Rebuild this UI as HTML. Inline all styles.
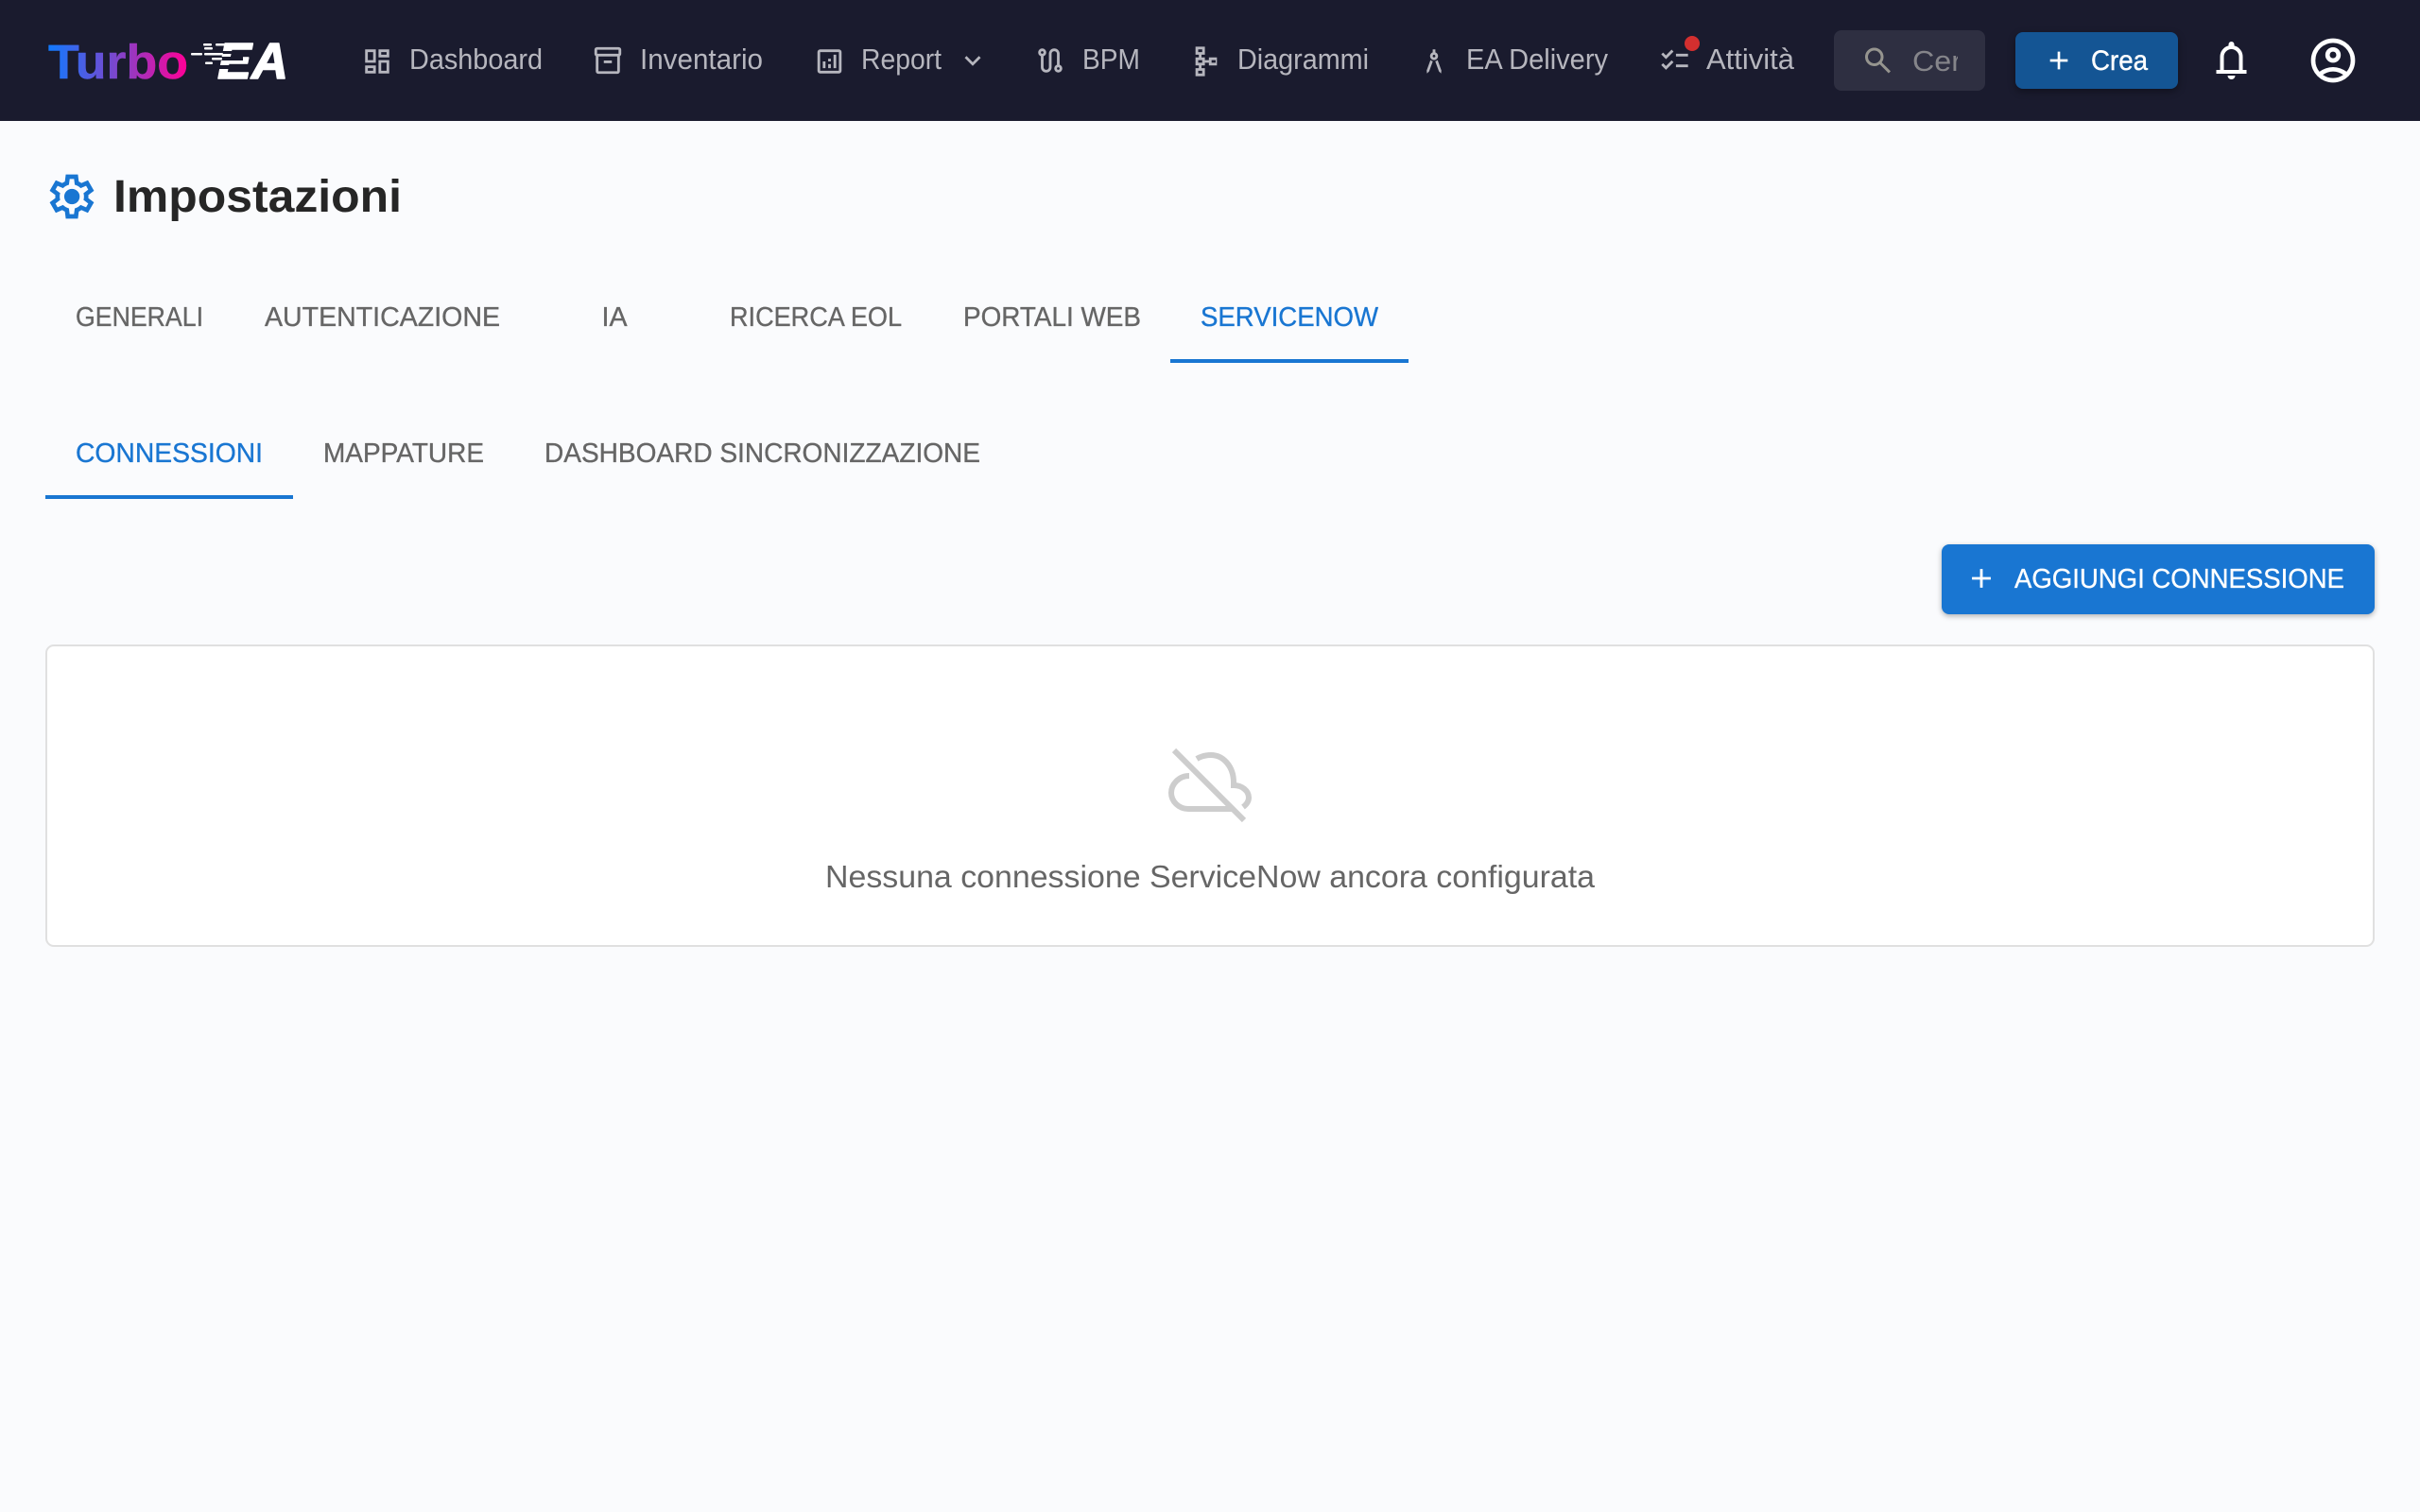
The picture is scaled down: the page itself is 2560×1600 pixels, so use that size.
<!DOCTYPE html>
<html lang="it">
<head>
<meta charset="utf-8">
<title>Impostazioni</title>
<style>
html,body{margin:0;padding:0;width:2560px;height:1600px;overflow:hidden;background:#fafbfd}
svg{display:block}
text{font-family:"Liberation Sans",sans-serif}
.nav{font-size:31px;fill:#b6b6be}
.tab{font-size:29px;fill:#666;stroke:#666;stroke-width:.35}
.act{fill:#1976d2;stroke:#1976d2}
</style>
</head>
<body>
<svg xmlns="http://www.w3.org/2000/svg" width="2560" height="1600" viewBox="0 0 2560 1600">
<defs>
<linearGradient id="lg" gradientUnits="userSpaceOnUse" x1="50" y1="0" x2="198" y2="0">
<stop offset="0" stop-color="#0f7bff"/><stop offset=".5" stop-color="#7f45cc"/><stop offset="1" stop-color="#ff0096"/>
</linearGradient>
</defs>
<rect width="2560" height="1600" fill="#fafbfd"/>
<rect width="2560" height="128" fill="#1a1b2e"/>

<!-- logo -->
<text x="51" y="83" font-size="51" font-weight="700" fill="url(#lg)" stroke="url(#lg)" stroke-width=".5" stroke-linejoin="round" textLength="148" lengthAdjust="spacingAndGlyphs">Turbo</text>
<text x="230" y="83" font-size="54" font-weight="700" font-style="italic" fill="#fff" stroke="#fff" stroke-width="1.5" stroke-linejoin="round" textLength="75" lengthAdjust="spacingAndGlyphs">EA</text>
<g fill="#1a1b2e">
<rect x="227" y="54" width="34" height="3"/><rect x="227" y="60" width="30" height="4"/><rect x="229" y="69" width="34" height="4"/>
</g>
<g fill="#fff">
<rect x="215" y="46" width="9" height="2.5" rx="1"/><rect x="228" y="46" width="10" height="2.5" rx="1"/>
<rect x="216" y="50" width="9" height="2.5" rx="1"/>
<rect x="202" y="56" width="12" height="2.5" rx="1"/><rect x="216" y="56" width="20" height="2.5" rx="1"/>
<rect x="224" y="61" width="11" height="2.5" rx="1"/><rect x="217" y="65.5" width="8" height="2.5" rx="1"/>
</g>

<!-- nav icons -->
<g fill="#b6b6be">
<svg x="382" y="48" width="34" height="34" viewBox="0 -960 960 960"><path d="M520-600v-240h320v240H520ZM120-440v-400h320v400H120Zm400 320v-400h320v400H520Zm-400 0v-240h320v240H120Zm80-400h160v-240H200v240Zm400 320h160v-240H600v240Zm0-480h160v-80H600v80ZM200-200h160v-80H200v80Z"/></svg>
<svg x="626" y="47" width="34" height="34" viewBox="0 -960 960 960"><path d="M200-80q-33 0-56.5-23.5T120-160v-451q-18-11-29-28.5T80-680v-120q0-33 23.5-56.5T160-880h640q33 0 56.5 23.5T880-800v120q0 23-11 40.5T840-611v451q0 33-23.5 56.5T760-80H200Zm0-520v440h560v-440H200Zm-40-80h640v-120H160v120Zm200 280h240v-80H360v80Zm120-80Z"/></svg>
<svg x="860.5" y="48" width="34" height="34" viewBox="0 -960 960 960"><path d="M280-280h80v-200h-80v200Zm320 0h80v-400h-80v400Zm-160 0h80v-120h-80v120Zm0-200h80v-80h-80v80ZM200-120q-33 0-56.5-23.5T120-200v-560q0-33 23.5-56.5T200-840h560q33 0 56.5 23.5T840-760v560q0 33-23.5 56.5T760-120H200Zm0-80h560v-560H200v560Zm0-560v560-560Z"/></svg>
<svg x="1012" y="48" width="34" height="34" viewBox="0 -960 960 960"><path d="M480-345 240-585l56-56 184 184 184-184 56 56-240 240Z"/></svg>
<svg x="1094" y="47" width="34" height="34" viewBox="0 -960 960 960"><path d="M360-120q-66 0-113-47t-47-113v-327q-35-13-57.5-43.5T120-720q0-50 35-85t85-35q50 0 85 35t35 85q0 39-22.5 69.5T280-607v327q0 33 23.5 56.5T360-200q33 0 56.5-23.5T440-280v-400q0-66 47-113t113-47q66 0 113 47t47 113v327q35 13 57.5 43.5T840-240q0 50-35 85t-85 35q-50 0-85-35t-35-85q0-39 22.5-70t57.5-43v-327q0-33-23.5-56.5T600-760q-33 0-56.5 23.5T520-680v400q0 66-47 113t-113 47ZM240-680q17 0 28.5-11.5T280-720q0-17-11.5-28.5T240-760q-17 0-28.5 11.5T200-720q0 17 11.5 28.5T240-680Zm480 480q17 0 28.5-11.5T760-240q0-17-11.5-28.5T720-280q-17 0-28.5 11.5T680-240q0 17 11.5 28.5T720-200Z"/></svg>
<svg x="1259" y="48" width="34" height="34" viewBox="0 -960 960 960"><path d="M160-40v-240h100v-80H160v-240h100v-80H160v-240h280v240H340v80h100v80h120v-80h240v240H560v-80H440v80H340v80h100v240H160Zm80-80h120v-80H240v80Zm0-320h120v-80H240v80Zm400 0h120v-80H640v80ZM240-760h120v-80H240v80Z"/></svg>
<svg x="1500" y="48" width="34" height="34" viewBox="0 -960 960 960"><path d="m270-120-10-88 114-314q15 14 32.5 23.5T444-484L334-182l-64 62Zm420 0-64-62-110-302q20-5 37.5-14.5T586-522l114 314-10 88ZM480-520q-50 0-85-35t-35-85q0-39 22.5-69.5T440-752v-88h80v88q35 12 57.5 42.5T600-640q0 50-35 85t-85 35Zm0-80q17 0 28.5-11.5T520-640q0-17-11.5-28.5T480-680q-17 0-28.5 11.5T440-640q0 17 11.5 28.5T480-600Z"/></svg>
<svg x="1754.5" y="47" width="34" height="34" viewBox="0 -960 960 960"><path d="M222-200 80-342l56-56 85 85 170-170 56 57-225 226Zm0-320L80-662l56-56 85 85 170-170 56 57-225 226Zm298 240v-80h360v80H520Zm0-320v-80h360v80H520Z"/></svg>
</g>
<circle cx="1790" cy="46" r="8" fill="#d32f2f"/>

<!-- nav text -->
<text class="nav" x="433" y="73" textLength="141" lengthAdjust="spacingAndGlyphs">Dashboard</text>
<text class="nav" x="677" y="73" textLength="130" lengthAdjust="spacingAndGlyphs">Inventario</text>
<text class="nav" x="911" y="73" textLength="85" lengthAdjust="spacingAndGlyphs">Report</text>
<text class="nav" x="1145" y="73" textLength="61" lengthAdjust="spacingAndGlyphs">BPM</text>
<text class="nav" x="1309" y="73" textLength="139" lengthAdjust="spacingAndGlyphs">Diagrammi</text>
<text class="nav" x="1551" y="73" textLength="150" lengthAdjust="spacingAndGlyphs">EA Delivery</text>
<text class="nav" x="1805" y="73" textLength="93" lengthAdjust="spacingAndGlyphs">Attività</text>

<!-- search -->
<rect x="1940" y="32" width="160" height="64" rx="8" fill="#2e2f41"/>
<svg x="1968.5" y="46" width="36" height="36" viewBox="0 -960 960 960" fill="#96958f"><path d="M784-120 532-372q-30 24-69 38t-83 14q-109 0-184.5-75.5T120-580q0-109 75.5-184.5T380-840q109 0 184.5 75.5T640-580q0 44-14 83t-38 69l252 252-56 56ZM380-400q75 0 127.5-52.5T560-580q0-75-52.5-127.5T380-760q-75 0-127.5 52.5T200-580q0 75 52.5 127.5T380-400Z"/></svg>
<svg x="2023" y="40" width="48" height="50" viewBox="2023 40 48 50"><text x="2023" y="75" font-size="31" fill="#85858a" textLength="86" lengthAdjust="spacingAndGlyphs">Cerca</text></svg>

<!-- crea -->
<rect x="2132" y="34" width="172" height="60" rx="8" fill="#145594" style="filter:drop-shadow(0 3px 4px rgba(0,0,0,.35))"/>
<svg x="2162" y="48" width="32" height="32" viewBox="0 -960 960 960" fill="#fff"><path d="M440-440H200v-80h240v-240h80v240h240v80H520v240h-80v-240Z"/></svg>
<text x="2212" y="74" font-size="30" fill="#fff" stroke="#fff" stroke-width=".4" textLength="60" lengthAdjust="spacingAndGlyphs">Crea</text>

<!-- bell, account -->
<svg x="2336.5" y="40" width="48" height="48" viewBox="0 -960 960 960" fill="#fff"><path d="M160-200v-80h80v-280q0-83 50-147.5T420-792v-28q0-25 17.5-42.5T480-880q25 0 42.5 17.5T540-820v28q80 20 130 84.5T720-560v280h80v80H160Zm320-300Zm0 420q-33 0-56.5-23.5T400-160h160q0 33-23.5 56.5T480-80ZM320-280h320v-280q0-66-47-113t-113-47q-66 0-113 47t-47 113v280Z"/></svg>
<svg x="2440" y="36" width="56" height="56" viewBox="0 -960 960 960" fill="#fff"><path d="M234-276q51-39 114-61.5T480-360q69 0 132 22.5T726-276q35-41 54.5-93T800-480q0-133-93.5-226.5T480-800q-133 0-226.5 93.5T160-480q0 59 19.5 111t54.5 93Zm246-164q-59 0-99.5-40.5T340-580q0-59 40.5-99.5T480-720q59 0 99.5 40.5T620-580q0 59-40.5 99.5T480-440Zm0 360q-83 0-156-31.5T197-197q-54-54-85.5-127T80-480q0-83 31.5-156T197-763q54-54 127-85.5T480-880q83 0 156 31.5T763-763q54 54 85.5 127T880-480q0 83-31.5 156T763-197q-54 54-127 85.5T480-80Zm0-80q53 0 100-15.5t86-44.5q-39-29-86-44.5T480-280q-53 0-100 15.5T294-220q39 29 86 44.5T480-160Zm0-360q26 0 43-17t17-43q0-26-17-43t-43-17q-26 0-43 17t-17 43q0 26 17 43t43 17Z"/></svg>

<!-- heading -->
<svg x="48" y="180" width="56" height="56" viewBox="0 -960 960 960" fill="#1976d2"><path d="m370-80-16-128q-13-5-24.5-12T307-235l-119 50L78-375l103-78q-1-7-1-13.5v-27q0-6.5 1-13.5L78-585l110-190 119 50q11-8 23-15t24-12l16-128h220l16 128q13 5 24.5 12t22.5 15l119-50 110 190-103 78q1 7 1 13.5v27q0 6.5-2 13.5l103 78-110 190-118-50q-11 8-23 15t-24 12L590-80H370Zm70-80h79l14-106q31-8 57.5-23.5T639-327l99 41 39-68-86-65q5-14 7-29.5t2-31.5q0-16-2-31.5t-7-29.5l86-65-39-68-99 42q-22-23-48.5-38.5T533-694l-13-106h-79l-14 106q-31 8-57.5 23.5T321-633l-99-41-39 68 86 64q-5 15-7 30t-2 32q0 16 2 31t7 30l-86 65 39 68 99-42q22 23 48.5 38.5T427-266l13 106Zm42-180q58 0 99-41t41-99q0-58-41-99t-99-41q-59 0-99.5 41T342-480q0 58 40.5 99t99.5 41Z"/></svg>
<text x="120" y="224" font-size="48" font-weight="700" fill="#262626" textLength="305" lengthAdjust="spacingAndGlyphs">Impostazioni</text>

<!-- main tabs -->
<text class="tab" x="80" y="345" textLength="135" lengthAdjust="spacingAndGlyphs">GENERALI</text>
<text class="tab" x="280" y="345" textLength="249" lengthAdjust="spacingAndGlyphs">AUTENTICAZIONE</text>
<text class="tab" x="636.5" y="345" textLength="27" lengthAdjust="spacingAndGlyphs">IA</text>
<text class="tab" x="772" y="345" textLength="182" lengthAdjust="spacingAndGlyphs">RICERCA EOL</text>
<text class="tab" x="1019" y="345" textLength="188" lengthAdjust="spacingAndGlyphs">PORTALI WEB</text>
<text class="tab act" x="1270" y="345" textLength="188" lengthAdjust="spacingAndGlyphs">SERVICENOW</text>
<rect x="1238" y="380" width="252" height="4" fill="#1976d2"/>

<!-- sub tabs -->
<text class="tab act" x="80" y="489" textLength="198" lengthAdjust="spacingAndGlyphs">CONNESSIONI</text>
<text class="tab" x="342" y="489" textLength="170" lengthAdjust="spacingAndGlyphs">MAPPATURE</text>
<text class="tab" x="576" y="489" textLength="461" lengthAdjust="spacingAndGlyphs">DASHBOARD SINCRONIZZAZIONE</text>
<rect x="48" y="524" width="262" height="4" fill="#1976d2"/>

<!-- add button -->
<rect x="2054" y="576" width="458" height="74" rx="8" fill="#1976d2" style="filter:drop-shadow(0 2px 3px rgba(0,0,0,.3))"/>
<svg x="2079" y="595" width="34" height="34" viewBox="0 -960 960 960" fill="#fff"><path d="M440-440H200v-80h240v-240h80v240h240v80H520v240h-80v-240Z"/></svg>
<text x="2131" y="622" font-size="29" fill="#fff" stroke="#fff" stroke-width=".35" textLength="349" lengthAdjust="spacingAndGlyphs">AGGIUNGI CONNESSIONE</text>

<!-- card -->
<rect x="49" y="683" width="2462" height="318" rx="8" fill="#fff" stroke="#e0e0e0" stroke-width="2"/>
<g fill="none" stroke="#cdcdcd" stroke-width="6">
<path d="M1242 794 1316 868"/>
<path d="M1266 803C1271 800 1276 799 1281 799C1294 799 1305 811 1305 828V831C1314 831 1321 837 1321 844C1321 848 1319 851 1315 854"/>
<path d="M1258 821C1247 821 1239 830 1239 839C1239 848 1247 856 1257 856H1303"/>
</g>
<text x="873" y="939" font-size="33" fill="#666" textLength="814" lengthAdjust="spacingAndGlyphs">Nessuna connessione ServiceNow ancora configurata</text>
</svg>
</body>
</html>
